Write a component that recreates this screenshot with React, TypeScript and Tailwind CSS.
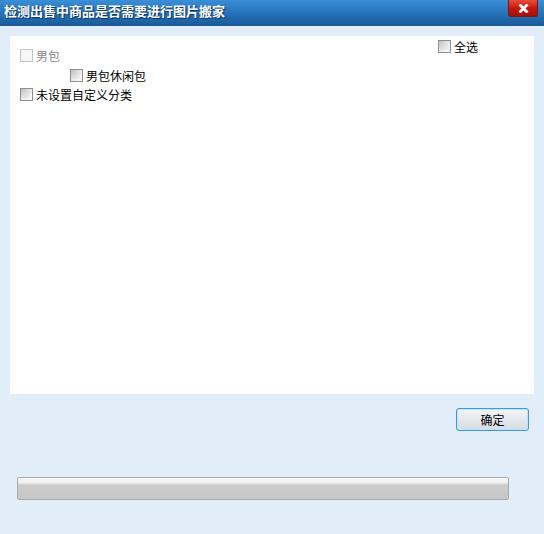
import React from 'react'

const font = { fontFamily: '"Noto Sans CJK SC", "Noto Sans", sans-serif' }

function Box({ disabled }: { disabled?: boolean }) {
  return (
    <span
      className={
        disabled
          ? 'inline-block w-[13px] h-[13px] shrink-0 border border-[#c4c4c4] bg-[#f7f7f7]'
          : 'inline-block w-[13px] h-[13px] shrink-0 border border-[#8e8f8f] bg-gradient-to-br from-[#b9bdc2] via-[#e8e9ea] to-[#ffffff] p-[2px]'
      }
    >
      {!disabled && (
        <span className="block w-full h-full bg-gradient-to-br from-[#c9cdd2] to-[#f4f4f4]" />
      )}
    </span>
  )
}

function Item({ label, disabled, className }: { label: string; disabled?: boolean; className?: string }) {
  return (
    <label className={'flex items-center gap-[3px] h-[13px] ' + (className ?? '')}>
      <Box disabled={disabled} />
      <span className={'text-[12px] leading-none ' + (disabled ? 'text-[#8a8a8a]' : 'text-black')}>
        {label}
      </span>
    </label>
  )
}

export default function App() {
  return (
    <div className="w-[544px] h-[534px] bg-[#e1edf8] flex flex-col overflow-hidden" style={font}>
      {/* Title bar */}
      <div className="h-[26px] flex items-start bg-gradient-to-b from-[#3a8fd6] via-[#2573bb] to-[#1b5a98] shrink-0">
        <div className="flex-1 pl-[4px] pt-[4px] text-white font-bold text-[13px] leading-none [text-shadow:1px_1px_1px_#0b2f55]">
          检测出售中商品是否需要进行图片搬家
        </div>
        <button className="w-[30px] h-[17px] mr-[6px] flex items-center justify-center bg-gradient-to-b from-[#e84a3c] via-[#c8170d] to-[#a80e08] border border-[#7a1a14] border-t-0 rounded-b-[3px]">
          <svg width="11" height="9" viewBox="0 0 11 9">
            <path d="M1.5 0.5 L9.5 8.5 M9.5 0.5 L1.5 8.5" stroke="white" strokeWidth="2.8" />
          </svg>
        </button>
      </div>

      {/* Tree panel */}
      <div className="mt-[10px] mx-[10px] w-[524px] h-[358px] bg-white shrink-0 flex">
        <div className="flex-1 pl-[10px] pt-[13px] flex flex-col gap-[7px]">
          <Item label="男包" disabled />
          <Item label="男包休闲包" className="ml-[50px]" />
          <Item label="未设置自定义分类" className="-mt-[1px]" />
        </div>
        <div className="pt-[4px] pr-[56px]">
          <Item label="全选" />
        </div>
      </div>

      {/* Button */}
      <div className="flex justify-end pr-[15px] mt-[14px]">
        <button className="w-[73px] h-[23px] rounded-[3px] border border-[#3c9bd8] bg-gradient-to-b from-[#f4f6f8] via-[#e4e8ec] to-[#d6dce2] text-[12px] text-black leading-none shadow-[inset_0_0_0_1px_#bfe3f8]">
          确定
        </button>
      </div>

      {/* Progress bar */}
      <div className="mt-[46px] ml-[17px] w-[492px] h-[23px] rounded-[2px] border border-[#a9a9a9] bg-gradient-to-b from-[#f4f4f4] from-20% via-[#cbcbcb] via-35% to-[#c6c6c6] shadow-[inset_0_1px_0_#ffffff]" />
    </div>
  )
}
